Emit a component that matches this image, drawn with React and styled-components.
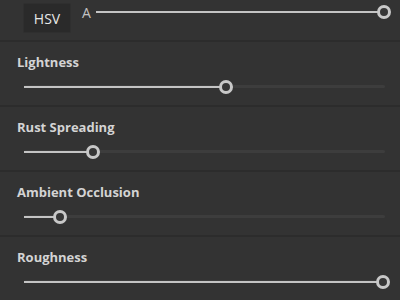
import React from 'react';
import styled, { createGlobalStyle } from 'styled-components';

const Global = createGlobalStyle`
  html, body {
    margin: 0;
    padding: 0;
    background: #333333;
  }
  body {
    font-family: "Open Sans", "Liberation Sans", sans-serif;
  }
`;

const Panel = styled.div`
  width: 400px;
  height: 300px;
  background: #333333;
  display: flex;
  flex-direction: column;
  overflow: hidden;
`;

const TopRow = styled.div`
  height: 40px;
  box-sizing: border-box;
  display: flex;
  align-items: flex-start;
  padding: 3px 10px 0 23px;
`;

const ModeButton = styled.button`
  width: 48px;
  height: 30px;
  box-sizing: border-box;
  background: #2a2a2a;
  border: 1px solid #2f2f2f;
  border-radius: 2px;
  color: #e8e8e8;
  font-family: "Open Sans", "Liberation Sans", sans-serif;
  font-size: 14px;
  padding: 0;
  cursor: pointer;
`;

const AxisLabel = styled.span`
  margin: 2px 0 0 11px;
  line-height: 15px;
  font-size: 14px;
  color: #c2c2c2;
`;

const Section = styled.div`
  height: 65px;
  box-sizing: border-box;
  border-top: 2px solid #2c2c2c;
  padding: 12px 15px 0 17px;
  display: flex;
  flex-direction: column;
`;

const Label = styled.div`
  font-size: 13px;
  font-weight: 700;
  line-height: 17px;
  color: #d4d4d4;
`;

const SliderRow = styled.div`
  display: flex;
  margin-top: 9px;
  padding-left: 7px;
`;

const Track = styled.div`
  position: relative;
  flex: 1;
  height: 14px;
  margin: ${p => p.$top ? '2px 0 0 5px' : '0'};
`;

const Rail = styled.div`
  position: absolute;
  left: 0;
  right: 0;
  top: 5px;
  height: 3px;
  border-radius: 2px;
  background: #3d3d3d;
`;

const Fill = styled.div`
  position: absolute;
  left: 0;
  top: 6px;
  height: 2px;
  background: #c4c4c4;
`;

const Thumb = styled.div`
  position: absolute;
  top: 0;
  width: 14px;
  height: 14px;
  box-sizing: border-box;
  margin-left: -7px;
  border-radius: 50%;
  border: 3px solid #c8c8c8;
  background: #363636;
`;

const Slider = ({ value, top }) => (
  <Track $top={top}>
    {!top && <Rail />}
    <Fill style={{ width: `${value * 100}%` }} />
    <Thumb style={{ left: `${value * 100}%` }} />
  </Track>
);

const params = [
  { name: 'Lightness', value: 0.56 },
  { name: 'Rust Spreading', value: 0.19 },
  { name: 'Ambient Occlusion', value: 0.1 },
  { name: 'Roughness', value: 0.995 },
];

export default function App() {
  return (
    <Panel>
      <Global />
      <TopRow>
        <ModeButton>HSV</ModeButton>
        <AxisLabel>A</AxisLabel>
        <Slider value={0.98} top />
      </TopRow>
      {params.map(p => (
        <Section key={p.name}>
          <Label>{p.name}</Label>
          <SliderRow>
            <Slider value={p.value} />
          </SliderRow>
        </Section>
      ))}
    </Panel>
  );
}
